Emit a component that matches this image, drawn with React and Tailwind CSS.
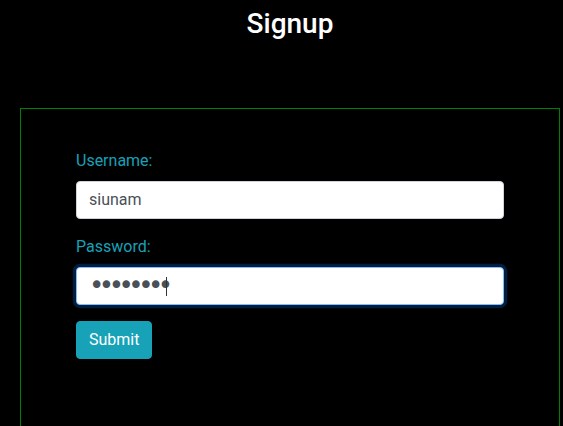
import React, { useState } from 'react';

const App = () => {
  const [username, setUsername] = useState('siunam');
  const [password, setPassword] = useState('password');

  return (
    <div className="min-h-screen bg-black font-['Roboto',sans-serif] text-white overflow-hidden">
      <div className="ml-[20px] w-[540px]">
        <h3 className="pt-[7px] text-center text-[28px] leading-[1.2] font-medium text-white">Signup</h3>

        <form
          className="mt-[67px] min-h-[360px] border border-[#008000] px-[55px] pt-[40px]"
          onSubmit={(e) => e.preventDefault()}
        >
          <div className="mb-4">
            <label className="mb-2 block text-base leading-6 text-[#17a2b8]">Username:</label>
            <input
              type="text"
              value={username}
              onChange={(e) => setUsername(e.target.value)}
              className="block h-[38px] w-full rounded border border-[#ced4da] bg-white px-3 text-base text-[#495057] outline-none"
            />
          </div>

          <div className="mb-4">
            <label className="mb-2 block text-base leading-6 text-[#17a2b8]">Password:</label>
            <div className="relative">
              <input
                type="password"
                autoFocus
                value={password}
                onChange={(e) => setPassword(e.target.value)}
                className="block h-[38px] w-full rounded border border-[#80bdff] bg-white px-3 font-['DejaVu_Sans',sans-serif] text-[26px] tracking-[-5.5px] text-[#495057] caret-transparent outline-none shadow-[0_0_0_3.2px_rgba(0,123,255,0.25)]"
              />
              {/* caret */}
              <span className="absolute left-[90px] top-[10px] h-[19px] w-px bg-[#333]" />
            </div>
          </div>

          <button
            type="submit"
            className="rounded border border-[#17a2b8] bg-[#17a2b8] px-3 py-1.5 text-base leading-6 text-white"
          >
            Submit
          </button>
        </form>
      </div>
    </div>
  );
};

export default App;
